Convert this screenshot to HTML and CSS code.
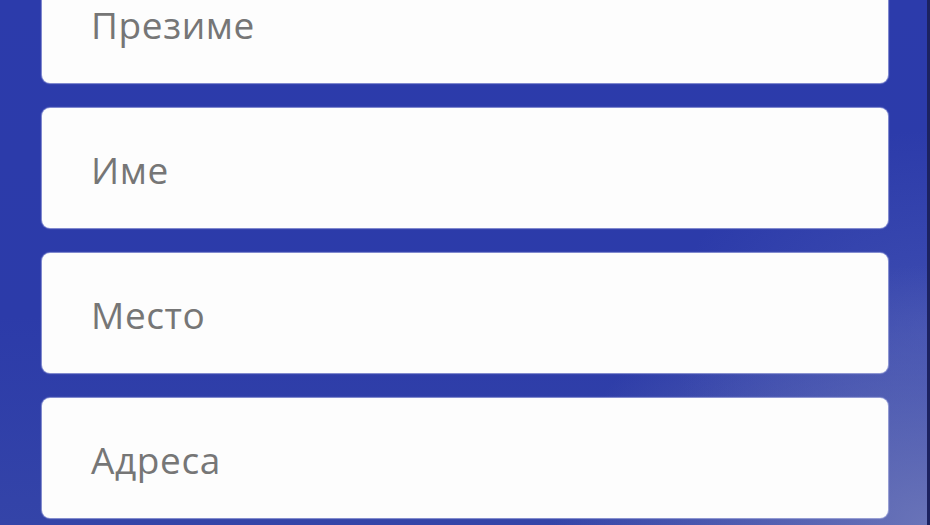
FILE: index.html
```html
<!DOCTYPE html>
<html lang="sr">
<head>
<meta charset="utf-8">
<link rel="stylesheet" href="styles.css">
</head>
<body>
<main class="form">
  <div class="field"><span class="label">Презиме</span></div>
  <div class="field"><span class="label">Име</span></div>
  <div class="field"><span class="label">Место</span></div>
  <div class="field"><span class="label">Адреса</span></div>
</main>
</body>
</html>
```
FILE: styles.css
```css
html, body {
  margin: 0;
  padding: 0;
  width: 930px;
  height: 525px;
  overflow: hidden;
}
body {
  background:
    radial-gradient(ellipse 380px 260px at 930px 525px, rgba(108,118,185,0.95), rgba(108,118,185,0) 100%),
    radial-gradient(ellipse 260px 200px at 930px 330px, rgba(80,95,185,0.5), rgba(80,95,185,0) 100%),
    linear-gradient(180deg, #2c3bab 0%, #2c3ba9 60%, #3444a8 100%);
  box-shadow: inset -3px 0 0 #1c2260;
  font-family: "Open Sans", "Noto Sans", sans-serif;
}
.form {
  display: flex;
  flex-direction: column;
  gap: 25px;
  padding: 0 42px;
  margin-top: -37px;
}
.field {
  height: 120px;
  background: #fdfdfd;
  border-radius: 8px;
  display: flex;
  align-items: center;
  padding-left: 49px;
  box-sizing: border-box;
  box-shadow: 0 0 1px 1px rgba(200, 205, 240, 0.6);
}
.label {
  font-size: 37px;
  color: #767676;
  letter-spacing: 0.6px;
  position: relative;
  top: 1px;
}
```
